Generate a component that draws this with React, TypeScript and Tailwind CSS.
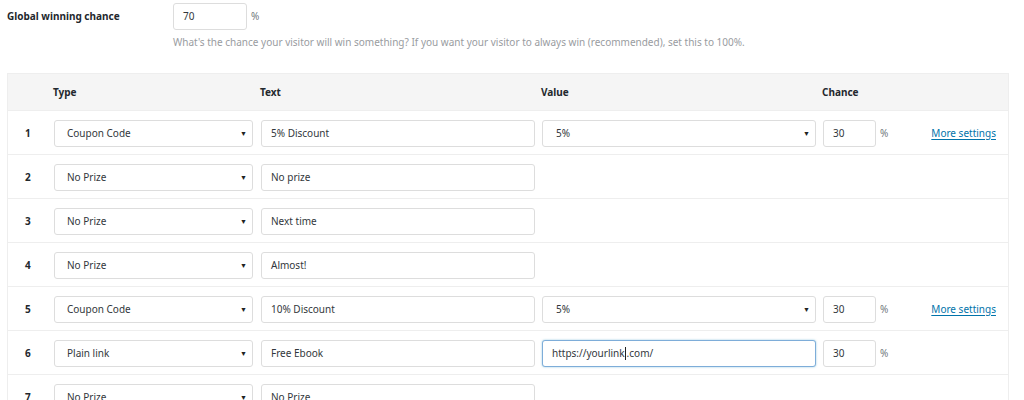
import type { ReactNode } from "react";

type Prize = {
  type: string;
  text: string;
  value?: string;
  valueKind?: "select" | "input";
  chance?: string;
  more?: boolean;
  focused?: boolean;
};

const prizes: Prize[] = [
  { type: "Coupon Code", text: "5% Discount", value: "5%", valueKind: "select", chance: "30", more: true },
  { type: "No Prize", text: "No prize" },
  { type: "No Prize", text: "Next time" },
  { type: "No Prize", text: "Almost!" },
  { type: "Coupon Code", text: "10% Discount", value: "5%", valueKind: "select", chance: "30", more: true },
  { type: "Plain link", text: "Free Ebook", value: "https://yourlink.com/", valueKind: "input", chance: "30", focused: true },
  { type: "No Prize", text: "No Prize" },
];

function Field({
  children,
  className,
  focused,
}: {
  children: ReactNode;
  className?: string;
  focused?: boolean;
}) {
  return (
    <div
      className={`flex h-[27px] shrink-0 items-center rounded-[3px] border bg-white text-[10px] text-[#32373c] ${
        focused
          ? "border-[#7eadd9] shadow-[0_0_2px_rgba(30,140,190,0.5)]"
          : "border-[#dddddd]"
      } ${className ?? ""}`}
    >
      {children}
    </div>
  );
}

function SelectBox({ label, className }: { label: string; className?: string }) {
  return (
    <Field className={`justify-between pl-[12px] pr-[5px] ${className ?? ""}`}>
      <span>{label}</span>
      <span className="text-[7px] leading-none text-[#222]">▼</span>
    </Field>
  );
}

function PrizeRow({ index, prize }: { index: number; prize: Prize }) {
  return (
    <div className="flex h-[44px] items-center border-b border-[#eeeeee] pt-[1px]">
      <div className="w-[46px] shrink-0 pl-[17px] text-[10px] font-bold text-[#23282d]">
        {index}
      </div>
      <SelectBox label={prize.type} className="w-[199px]" />
      <Field className="ml-[8px] w-[274px] pl-[9px]">{prize.text}</Field>
      {prize.valueKind === "select" ? (
        <SelectBox label={prize.value ?? ""} className="ml-[7px] w-[274px] pl-[13px]" />
      ) : null}
      {prize.valueKind === "input" ? (
        <Field focused={prize.focused} className="ml-[7px] w-[274px] pl-[9px]">
          <span>https://yourlink</span>
          <span className="mx-[0.5px] inline-block h-[13px] w-px bg-[#222]" />
          <span>.com/</span>
        </Field>
      ) : null}
      {prize.chance ? (
        <>
          <Field className="ml-[7px] w-[53px] pl-[9px]">{prize.chance}</Field>
          <span className="ml-[4px] text-[10px] text-[#72777c]">%</span>
        </>
      ) : null}
      {prize.more ? (
        <a
          href="#"
          className="ml-[43px] text-[10px] text-[#0073aa] underline underline-offset-2"
        >
          More settings
        </a>
      ) : null}
    </div>
  );
}

export default function App() {
  return (
    <div
      className="h-[400px] w-[1024px] overflow-hidden bg-white text-[#23282d]"
      style={{ fontFamily: '"Noto Sans", "Open Sans", sans-serif' }}
    >
      <div className="flex h-[73px] pl-[7px] pt-[3px]">
        <div className="w-[166px] pt-[6px] text-[10px] leading-[14px] font-bold">
          Global winning chance
        </div>
        <div>
          <div className="flex items-center">
            <Field className="w-[74px] pl-[9px]">70</Field>
            <span className="ml-[4px] text-[10px] text-[#72777c]">%</span>
          </div>
          <p className="mt-[4px] text-[10px] leading-[16px] text-[#999c9f]">
            What's the chance your visitor will win something? If you want your
            visitor to always win (recommended), set this to 100%.
          </p>
        </div>
      </div>

      <div className="ml-[7px] w-[1002px] border-x border-t border-[#eeeeee]">
        <div className="flex h-[37px] items-center border-b border-[#eeeeee] bg-[#f5f5f5] text-[10px] font-bold">
          <div className="w-[45px]" />
          <div className="w-[207px]">Type</div>
          <div className="w-[281px]">Text</div>
          <div className="w-[281px]">Value</div>
          <div>Chance</div>
        </div>
        {prizes.map((prize, i) => (
          <PrizeRow key={i} index={i + 1} prize={prize} />
        ))}
      </div>
    </div>
  );
}
